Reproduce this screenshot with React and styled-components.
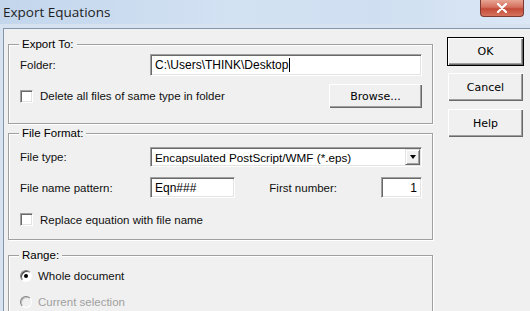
import styled, { createGlobalStyle } from "styled-components";

const GlobalStyle = createGlobalStyle`
    body {
        margin: 0;
        background: #f0f0f0;
        font-family: "Liberation Sans", Arial, sans-serif;
    }
`;

const Window = styled.div`
    width: 530px;
    height: 311px;
    overflow: hidden;
    background: #d6e2f0;
    display: flex;
    flex-direction: column;
`;

const TitleBar = styled.div`
    height: 24px;
    flex-shrink: 0;
    display: flex;
    align-items: flex-start;
    background: linear-gradient(90deg, #c3d6ec 0%, #d3e2f3 45%, #cfdff1 70%, #dbe7f5 100%);
`;

const Caption = styled.span`
    font-family: "Open Sans", "Noto Sans", sans-serif;
    font-size: 13.5px;
    color: #1e1e1e;
    padding: 2px 0 0 3px;
    line-height: 20px;
`;

const CloseButton = styled.div`
    margin-left: auto;
    margin-right: 6px;
    width: 42px;
    height: 16px;
    border: 1px solid #7d3a33;
    border-top: none;
    border-radius: 0 0 4px 4px;
    background: linear-gradient(180deg, #e8a493 0%, #d46f5d 45%, #c34a37 55%, #d6735f 100%);
    display: flex;
    align-items: center;
    justify-content: center;
`;

const Client = styled.div`
    flex: 1;
    margin: 4px 0 0 3px;
    border-left: 1px solid #8496ab;
    border-top: 1px solid #8496ab;
    background: #f0f0f0;
    display: flex;
    padding: 15px 0 0 4px;
`;

const LeftColumn = styled.div`
    width: 425px;
    display: flex;
    flex-direction: column;
`;

const RightColumn = styled.div`
    width: 77px;
    margin-left: 14px;
    margin-top: -7px;
    display: flex;
    flex-direction: column;
    gap: 6px;
`;

const Group = styled.div`
    position: relative;
    border: 1px solid #a0a0a0;
    box-shadow: inset 1px 1px 0 #ffffff, 1px 1px 0 #ffffff;
    padding: ${(p) => p.$pad};
    margin-bottom: ${(p) => p.$gap || "0px"};
    display: flex;
    flex-direction: column;
    flex-shrink: 0;
`;

const Legend = styled.span`
    position: absolute;
    top: -8px;
    left: 10px;
    padding: 0 3px;
    background: #f0f0f0;
    font-size: 11.5px;
    line-height: 14px;
    color: #000;
`;

const Row = styled.div`
    display: flex;
    align-items: center;
    height: ${(p) => p.$h}px;
    margin-top: ${(p) => p.$mt || 0}px;
`;

const Label = styled.span`
    font-size: 11.5px;
    color: ${(p) => (p.$disabled ? "#a0a0a0" : "#111")};
    width: ${(p) => (p.$w ? `${p.$w}px` : "auto")};
    margin-left: ${(p) => p.$ml || 0}px;
    flex-shrink: 0;
    white-space: nowrap;
`;

const TextBox = styled.div`
    box-sizing: border-box;
    width: ${(p) => p.$w}px;
    height: ${(p) => p.$h}px;
    background: #fff;
    border-top: 1px solid #a0a0a0;
    border-left: 1px solid #a0a0a0;
    border-right: 1px solid #fff;
    border-bottom: 1px solid #fff;
    box-shadow: inset 1px 1px 0 #696969, inset -1px -1px 0 #e3e3e3;
    display: flex;
    align-items: center;
    justify-content: ${(p) => (p.$right ? "flex-end" : "flex-start")};
    padding: 0 4px;
    font-size: 12px;
    color: #000;
`;

const Caret = styled.span`
    display: inline-block;
    width: 1px;
    height: 14px;
    background: #000;
    margin-left: 1px;
`;

const SelectBox = styled(TextBox)`
    padding: 0 1px 0 4px;
    justify-content: space-between;
    font-size: 11.7px;
`;

const DropButton = styled.div`
    width: 15px;
    height: 16px;
    box-sizing: border-box;
    background: #f0f0f0;
    border-top: 1px solid #e3e3e3;
    border-left: 1px solid #e3e3e3;
    border-right: 1px solid #696969;
    border-bottom: 1px solid #696969;
    box-shadow: inset 1px 1px 0 #fff, inset -1px -1px 0 #a0a0a0;
    display: flex;
    align-items: center;
    justify-content: center;
`;

const Arrow = styled.span`
    width: 0;
    height: 0;
    border-left: 3.5px solid transparent;
    border-right: 3.5px solid transparent;
    border-top: 4px solid #000;
`;

const CheckBox = styled.span`
    box-sizing: border-box;
    width: 13px;
    height: 13px;
    background: #fff;
    border-top: 1px solid #a0a0a0;
    border-left: 1px solid #a0a0a0;
    border-right: 1px solid #fff;
    border-bottom: 1px solid #fff;
    box-shadow: inset 1px 1px 0 #696969, inset -1px -1px 0 #e3e3e3;
    margin: 0 7px 0 0;
    flex-shrink: 0;
`;

const Radio = styled.span`
    box-sizing: border-box;
    width: 12px;
    height: 12px;
    border-radius: 50%;
    background: ${(p) => (p.$disabled ? "#f0f0f0" : "#fff")};
    border: 1px solid;
    border-color: #808080 #ffffff #ffffff #808080;
    box-shadow: inset 1px 1px 0 ${(p) => (p.$disabled ? "#c0c0c0" : "#404040")};
    margin: 0 6px 0 0;
    display: flex;
    align-items: center;
    justify-content: center;
    flex-shrink: 0;

    &::after {
        content: "";
        display: ${(p) => (p.$checked ? "block" : "none")};
        width: 4px;
        height: 4px;
        border-radius: 50%;
        background: #000;
    }
`;

const Button = styled.div`
    box-sizing: border-box;
    width: ${(p) => p.$w}px;
    height: ${(p) => p.$h}px;
    background: #f0f0f0;
    border: 1px solid ${(p) => (p.$default ? "#000" : "transparent")};
    box-shadow: inset 1px 1px 0 #fff, inset -1px -1px 0 #696969,
        inset -2px -2px 0 #a0a0a0;
    display: flex;
    align-items: center;
    justify-content: center;
    font-family: "DejaVu Sans", "Liberation Sans", sans-serif;
    font-size: 11px;
    color: #000;
    flex-shrink: 0;
`;

const BrowseButton = styled(Button)`
    margin-left: auto;
    margin-right: -1px;
`;

export default function App() {
    return (
        <>
            <GlobalStyle />
            <Window>
                <TitleBar>
                    <Caption>Export Equations</Caption>
                    <CloseButton>
                        <svg width="12" height="10" viewBox="0 0 12 10">
                            <path
                                d="M2 1 L10 9 M10 1 L2 9"
                                stroke="#fff"
                                strokeWidth="2.2"
                                strokeLinecap="round"
                            />
                        </svg>
                    </CloseButton>
                </TitleBar>
                <Client>
                    <LeftColumn>
                        <Group $pad="9px 10px 14px 11px" $gap="9px">
                            <Legend>Export To:</Legend>
                            <Row $h={22}>
                                <Label $w={130}>Folder:</Label>
                                <TextBox $w={273} $h={22}>
                                    C:\Users\THINK\Desktop
                                    <Caret />
                                </TextBox>
                            </Row>
                            <Row $h={26} $mt={7}>
                                <CheckBox />
                                <Label>Delete all files of same type in folder</Label>
                                <BrowseButton $w={95} $h={26}>
                                    Browse...
                                </BrowseButton>
                            </Row>
                        </Group>
                        <Group $pad="13px 10px 13px 11px" $gap="15px">
                            <Legend>File Format:</Legend>
                            <Row $h={20}>
                                <Label $w={130}>File type:</Label>
                                <SelectBox $w={273} $h={20}>
                                    Encapsulated PostScript/WMF (*.eps)
                                    <DropButton>
                                        <Arrow />
                                    </DropButton>
                                </SelectBox>
                            </Row>
                            <Row $h={21} $mt={10}>
                                <Label $w={130}>File name pattern:</Label>
                                <TextBox $w={86} $h={21}>
                                    Eqn###
                                </TextBox>
                                <Label $w={112} $ml={34}>
                                    First number:
                                </Label>
                                <TextBox $w={41} $h={21} $right>
                                    1
                                </TextBox>
                            </Row>
                            <Row $h={13} $mt={15}>
                                <CheckBox />
                                <Label>Replace equation with file name</Label>
                            </Row>
                        </Group>
                        <Group $pad="12px 10px 30px 11px">
                            <Legend>Range:</Legend>
                            <Row $h={16}>
                                <Radio $checked />
                                <Label>Whole document</Label>
                            </Row>
                            <Row $h={16} $mt={10}>
                                <Radio $disabled />
                                <Label $disabled>Current selection</Label>
                            </Row>
                        </Group>
                    </LeftColumn>
                    <RightColumn>
                        <Button $w={77} $h={29} $default>
                            OK
                        </Button>
                        <Button $w={77} $h={30}>
                            Cancel
                        </Button>
                        <Button $w={77} $h={30}>
                            Help
                        </Button>
                    </RightColumn>
                </Client>
            </Window>
        </>
    );
}
